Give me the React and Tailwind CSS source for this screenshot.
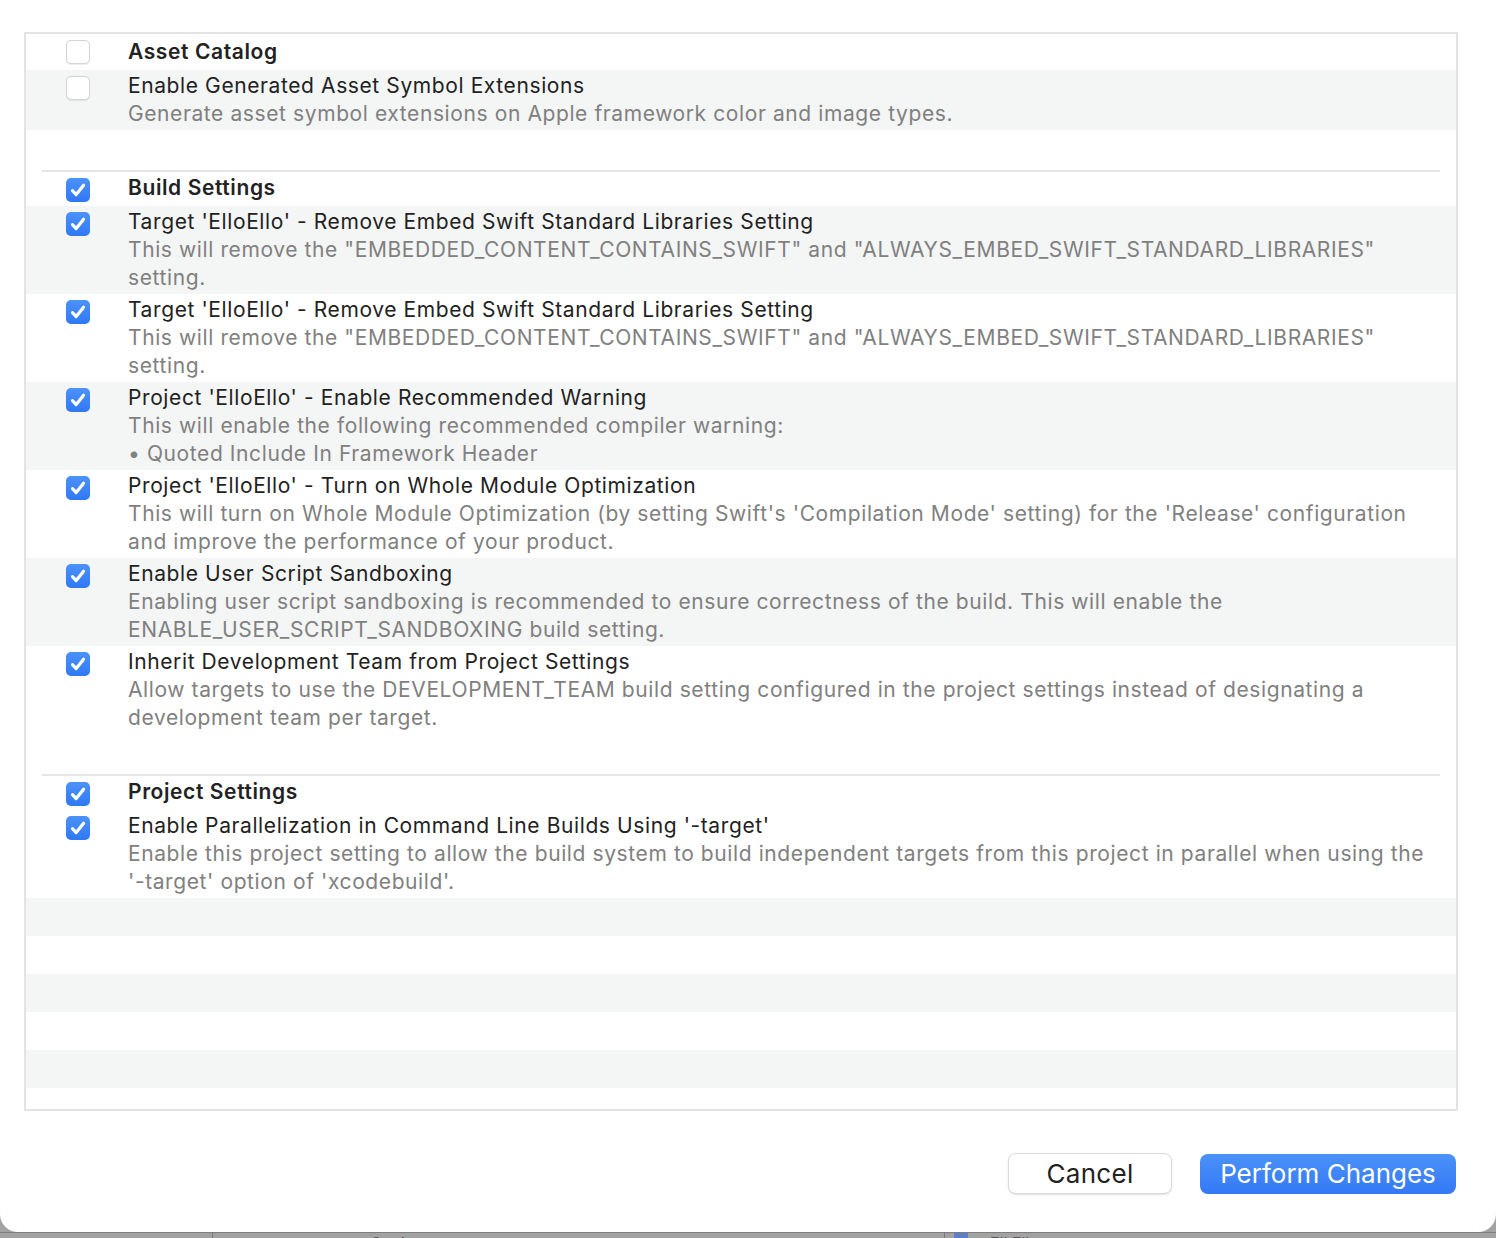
import React from 'react';

const font = { fontFamily: 'Inter, "Noto Sans", sans-serif' };

const Checkbox = ({ checked }) => {
    if (!checked) {
        return (
            <div className="w-6 h-6 rounded-[5px] border border-[#d4d4d4] bg-white shadow-[0_0.5px_1px_rgba(0,0,0,0.08)] shrink-0"></div>
        );
    }
    return (
        <div className="w-6 h-6 rounded-[5px] bg-gradient-to-b from-[#4c92f9] to-[#2f78f4] flex items-center justify-center shrink-0">
            <svg width="24" height="24" viewBox="0 0 24 24" fill="none">
                <path d="M6.5 12.6 L10.2 16.6 L17.6 7.2" stroke="white" strokeWidth="3.2" strokeLinecap="round" strokeLinejoin="round" />
            </svg>
        </div>
    );
};

const HeaderRow = ({ title, checked, extraTop }) => (
    <div className={`flex items-start ${extraTop ? 'pt-[4px] pb-[4px]' : 'pt-[2px] pb-[4px]'}`}>
        <div className={`w-[102px] pl-[40px] flex ${extraTop ? 'pt-[2px]' : 'pt-[4px]'}`}>
            <Checkbox checked={checked} />
        </div>
        <div className="text-[21px] leading-[28px] font-semibold text-[#222] tracking-[0.6px] whitespace-nowrap">{title}</div>
    </div>
);

const SettingRow = ({ title, lines, grey, checked = true }) => (
    <div className={`flex items-start py-[2px] ${grey ? 'bg-[#f4f5f5]' : 'bg-white'}`}>
        <div className="w-[102px] pl-[40px] pt-[4px] flex">
            <Checkbox checked={checked} />
        </div>
        <div className="whitespace-nowrap tracking-[0.6px]">
            <div className="text-[21px] leading-[28px] text-[#222]">{title}</div>
            {lines.map((l, i) => (
                <div key={i} className="text-[21px] leading-[28px] text-[#808080]">{l}</div>
            ))}
        </div>
    </div>
);

const Separator = () => (
    <div className="mx-[16px] h-[2px] bg-[#e6e6e6]"></div>
);

const buildRows = [
    {
        title: "Target 'ElloEllo' - Remove Embed Swift Standard Libraries Setting",
        lines: ['This will remove the "EMBEDDED_CONTENT_CONTAINS_SWIFT" and "ALWAYS_EMBED_SWIFT_STANDARD_LIBRARIES"', 'setting.'],
    },
    {
        title: "Target 'ElloEllo' - Remove Embed Swift Standard Libraries Setting",
        lines: ['This will remove the "EMBEDDED_CONTENT_CONTAINS_SWIFT" and "ALWAYS_EMBED_SWIFT_STANDARD_LIBRARIES"', 'setting.'],
    },
    {
        title: "Project 'ElloEllo' - Enable Recommended Warning",
        lines: ['This will enable the following recommended compiler warning:', '• Quoted Include In Framework Header'],
    },
    {
        title: "Project 'ElloEllo' - Turn on Whole Module Optimization",
        lines: ["This will turn on Whole Module Optimization (by setting Swift's 'Compilation Mode' setting) for the 'Release' configuration", 'and improve the performance of your product.'],
    },
    {
        title: 'Enable User Script Sandboxing',
        lines: ['Enabling user script sandboxing is recommended to ensure correctness of the build. This will enable the', 'ENABLE_USER_SCRIPT_SANDBOXING build setting.'],
    },
    {
        title: 'Inherit Development Team from Project Settings',
        lines: ['Allow targets to use the DEVELOPMENT_TEAM build setting configured in the project settings instead of designating a', 'development team per target.'],
    },
];

const App = () => {
    return (
        <div className="w-[1496px] h-[1238px] bg-[#a2a2a2] flex flex-col overflow-hidden" style={font}>
            <div className="h-[1232px] bg-white rounded-b-[18px] flex flex-col pt-[32px] pl-[24px] pr-[38px] shrink-0">
                <div className="h-[1079px] border-2 border-[#e3e3e3] flex flex-col overflow-hidden">
                    <HeaderRow title="Asset Catalog" checked={false} extraTop />
                    <SettingRow
                        title="Enable Generated Asset Symbol Extensions"
                        lines={['Generate asset symbol extensions on Apple framework color and image types.']}
                        grey={true}
                        checked={false}
                    />
                    <div className="h-[40px]"></div>
                    <Separator />
                    <HeaderRow title="Build Settings" checked={true} />
                    {buildRows.map((r, i) => (
                        <SettingRow key={i} title={r.title} lines={r.lines} grey={i % 2 === 0} />
                    ))}
                    <div className="h-[40px]"></div>
                    <Separator />
                    <HeaderRow title="Project Settings" checked={true} />
                    <SettingRow
                        title="Enable Parallelization in Command Line Builds Using '-target'"
                        lines={['Enable this project setting to allow the build system to build independent targets from this project in parallel when using the', "'-target' option of 'xcodebuild'."]}
                        grey={false}
                    />
                    <div className="h-[38px] bg-[#f4f5f5] shrink-0"></div>
                    <div className="h-[38px] bg-white shrink-0"></div>
                    <div className="h-[38px] bg-[#f4f5f5] shrink-0"></div>
                    <div className="h-[38px] bg-white shrink-0"></div>
                    <div className="h-[38px] bg-[#f4f5f5] shrink-0"></div>
                    <div className="flex-1 bg-white"></div>
                </div>
                <div className="flex justify-end items-center gap-[28px] pt-[42px] pr-[2px]">
                    <button className="w-[164px] h-[41px] rounded-[8px] bg-white border border-[#dadada] shadow-[0_1px_2px_rgba(0,0,0,0.12)] text-[26px] text-[#222] leading-none tracking-[0.3px]">
                        Cancel
                    </button>
                    <button className="w-[256px] h-[40px] rounded-[8px] bg-gradient-to-b from-[#4c92f9] to-[#3478f6] text-[26px] text-white leading-none tracking-[0px]">
                        Perform Changes
                    </button>
                </div>
            </div>
            <div className="flex-1 border-t border-[#7d7d7d] flex items-start text-[16px] leading-[20px] text-[#555]">
                <div className="w-[213px] h-full border-r border-[#777]"></div>
                <div className="w-[732px] h-full border-r border-[#777] pl-[158px]">Setti</div>
                <div className="w-[14px] h-full bg-[#5a7fc4] ml-[9px]"></div>
                <div className="pl-[22px]">Ell Ell</div>
            </div>
        </div>
    );
};

export default App;
